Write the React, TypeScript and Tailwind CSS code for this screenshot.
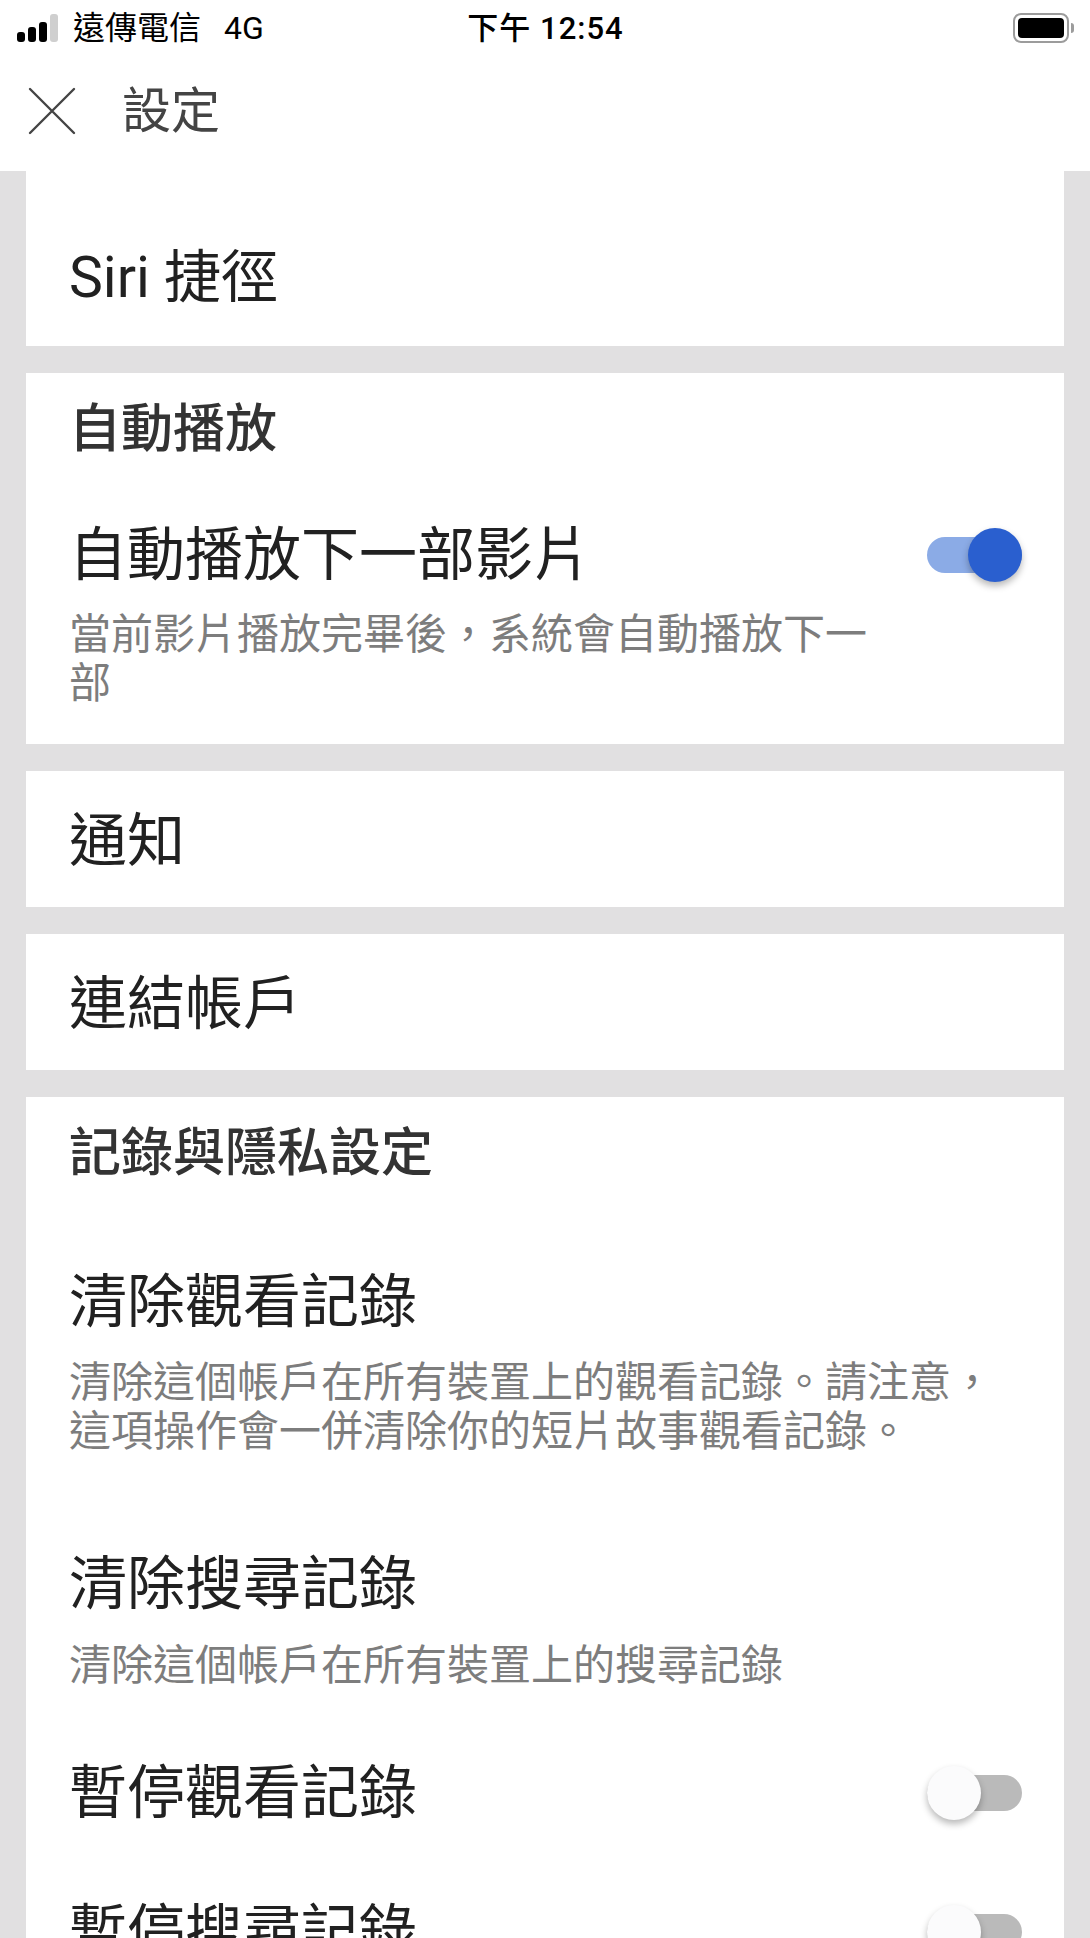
const font = { fontFamily: '"Roboto", "Noto Sans CJK TC", sans-serif' };

function Toggle({ on }: { on?: boolean }) {
  return (
    <div className="relative h-[36px] w-[95px] shrink-0">
      <div className={`absolute inset-0 rounded-full ${on ? 'bg-[#8babe6]' : 'bg-[#bababa]'}`} />
      <div
        className={`absolute top-[-9px] h-[54px] w-[54px] rounded-full shadow-[0_4px_7px_rgba(0,0,0,0.28)] ${
          on ? 'right-0 bg-[#2a5fcf]' : 'left-0 bg-[#fbfbfc]'
        }`}
      />
    </div>
  );
}

function SectionTitle({ children }: { children: string }) {
  return <div className="text-[52px] leading-[64px] font-medium text-[#333333]">{children}</div>;
}

function RowTitle({ children }: { children: string }) {
  return <div className="text-[58px] leading-[68px] text-[#212121]">{children}</div>;
}

function Hint({ children }: { children: React.ReactNode }) {
  return <div className="text-[42px] leading-[49px] text-[#7d7d7d]">{children}</div>;
}

export default function App() {
  return (
    <div className="flex h-[1938px] w-[1090px] flex-col overflow-hidden bg-[#e1e0e1]" style={font}>
      {/* status bar */}
      <div className="flex h-[56px] shrink-0 items-center justify-between bg-white pl-[17px] pr-[16px] text-black">
        <div className="flex w-[360px] items-center">
          <div className="flex items-end gap-[3px]">
            <div className="h-[10px] w-[8px] rounded-[3px] bg-black" />
            <div className="h-[15px] w-[8px] rounded-[3px] bg-black" />
            <div className="h-[20px] w-[8px] rounded-[3px] bg-black" />
            <div className="h-[28px] w-[8px] rounded-[3px] bg-[#cfcfcf]" />
          </div>
          <span className="ml-[15px] text-[32px] leading-none">遠傳電信</span>
          <span className="ml-[23px] text-[32px] leading-none">4G</span>
        </div>
        <div className="text-[31px] leading-none font-medium tracking-[1px]">下午 12:54</div>
        <div className="flex w-[360px] items-center justify-end">
          <div className="flex h-[30px] w-[56px] items-center rounded-[8px] border-[2px] border-[#9c9c9c] p-[3px]">
            <div className="h-full w-full rounded-[4px] bg-black" />
          </div>
          <div className="ml-[2px] h-[10px] w-[3px] rounded-r-full bg-[#9c9c9c]" />
        </div>
      </div>

      {/* header */}
      <div className="flex h-[115px] shrink-0 items-center bg-white pb-[5px] pl-[28px]">
        <svg width="48" height="48" viewBox="0 0 48 48" fill="none" stroke="#444444" strokeWidth="2.4" strokeLinecap="round">
          <path d="M2 2 L46 46 M46 2 L2 46" />
        </svg>
        <div className="ml-[46px] text-[49px] leading-none text-[#444444]">設定</div>
      </div>

      {/* cards */}
      <div className="flex flex-col gap-[27px] px-[26px]">
        <div className="flex h-[175px] items-center bg-white pl-[43px] pt-[38px]">
          <div className="text-[57px] leading-[68px] text-[#212121]">Siri 捷徑</div>
        </div>

        <div className="h-[371px] bg-white pl-[43px] pr-[42px]">
          <div className="pt-[25px]">
            <SectionTitle>自動播放</SectionTitle>
          </div>
          <div className="mt-[59px] flex items-center justify-between">
            <RowTitle>自動播放下一部影片</RowTitle>
            <Toggle on />
          </div>
          <div className="mt-[21px] w-[810px]">
            <Hint>當前影片播放完畢後，系統會自動播放下一部</Hint>
          </div>
        </div>

        <div className="flex h-[136px] items-center bg-white pl-[43px] pt-[3px]">
          <RowTitle>通知</RowTitle>
        </div>

        <div className="flex h-[136px] items-center bg-white pl-[43px] pt-[3px]">
          <RowTitle>連結帳戶</RowTitle>
        </div>

        <div className="bg-white pb-[100px] pl-[43px] pr-[42px]">
          <div className="pt-[25px]">
            <SectionTitle>記錄與隱私設定</SectionTitle>
          </div>
          <div className="mt-[82px]">
            <RowTitle>清除觀看記錄</RowTitle>
          </div>
          <div className="mt-[22px] w-[930px]">
            <Hint>清除這個帳戶在所有裝置上的觀看記錄。請注意，這項操作會一併清除你的短片故事觀看記錄。</Hint>
          </div>
          <div className="mt-[94px]">
            <RowTitle>清除搜尋記錄</RowTitle>
          </div>
          <div className="mt-[23px]">
            <Hint>清除這個帳戶在所有裝置上的搜尋記錄</Hint>
          </div>
          <div className="mt-[69px] flex items-center justify-between">
            <RowTitle>暫停觀看記錄</RowTitle>
            <Toggle />
          </div>
          <div className="mt-[71px] flex items-center justify-between">
            <RowTitle>暫停搜尋記錄</RowTitle>
            <Toggle />
          </div>
        </div>
      </div>
    </div>
  );
}
